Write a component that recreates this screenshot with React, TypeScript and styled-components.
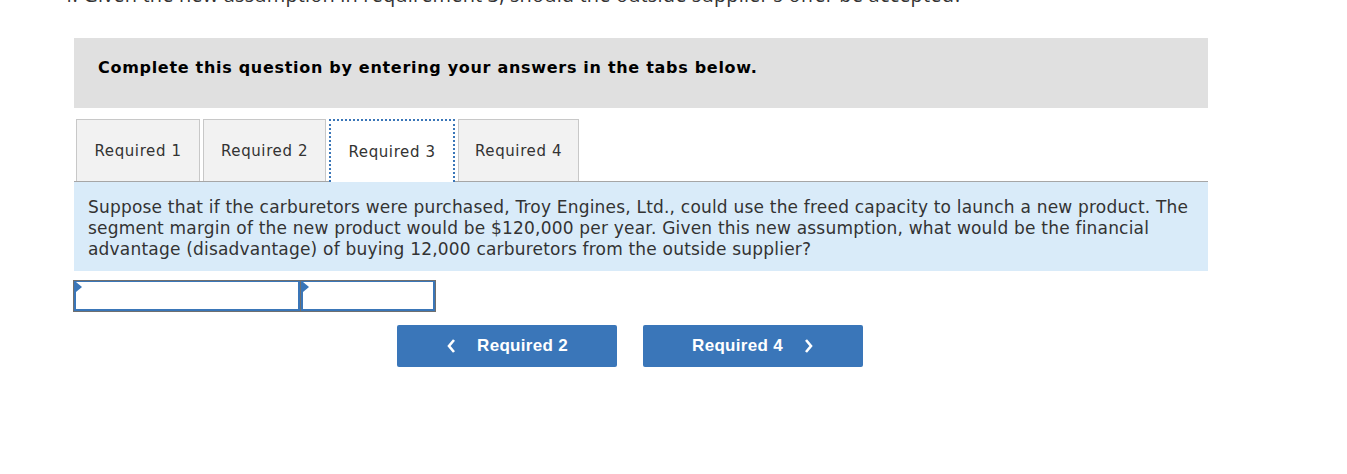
import React from "react";
import styled, { createGlobalStyle } from "styled-components";

const Global = createGlobalStyle`
  html, body { margin: 0; padding: 0; background: #fff; }
  body { font-family: "DejaVu Sans", Verdana, sans-serif; color: #333; overflow: hidden; }
`;

const Page = styled.div`
  width: 1347px;
  height: 474px;
  position: relative;
  overflow: hidden;
`;

const Question = styled.div`
  font-family: "Open Sans", "Liberation Sans", sans-serif;
  font-size: 20px;
  color: #333;
  line-height: 24px;
  margin: -17px 0 0 61px;
  letter-spacing: 0.15px;
  white-space: nowrap;
`;

const Container = styled.div`
  width: 1134px;
  margin: 31px 0 0 74px;
`;

const Banner = styled.div`
  background: #e0e0e0;
  height: 70px;
  padding: 0 24px;
  display: flex;
  align-items: center;
`;

const BannerText = styled.div`
  font-weight: bold;
  font-size: 16px;
  letter-spacing: 0.7px;
  color: #000;
  margin-top: -11px;
`;

const Tabs = styled.div`
  display: flex;
  align-items: flex-start;
  margin-top: 11px;
  padding-left: 2px;
  gap: 3px;
  border-bottom: 1px solid #a6a6a6;
`;

const Tab = styled.div<{ $active?: boolean; $w: number }>`
  box-sizing: border-box;
  width: ${(p) => p.$w}px;
  height: ${(p) => (p.$active ? "63px" : "62px")};
  display: flex;
  align-items: center;
  justify-content: center;
  padding-top: ${(p) => (p.$active ? "0px" : "1px")};
  font-size: 15px;
  letter-spacing: 0.6px;
  color: #333;
  background: ${(p) => (p.$active ? "#fff" : "#f2f2f2")};
  border: ${(p) => (p.$active ? "2px dotted #3a76b8" : "1px solid #c8c8c8")};
  border-bottom: none;
  margin-bottom: ${(p) => (p.$active ? "-1px" : "0")};
  position: relative;
  z-index: ${(p) => (p.$active ? 1 : 0)};
`;

const Prompt = styled.div`
  background: #d9ebf9;
  padding: 15px 8px 11px 14px;
  font-size: 17px;
  letter-spacing: 0.2px;
  line-height: 21px;
  color: #333;
`;

const AnswerRow = styled.div`
  display: flex;
  margin-top: 9px;
  width: 361px;
  border-top: 1px solid #7a7a7a;
  gap: 1px;
`;

const Cell = styled.div<{ $w: number }>`
  position: relative;
  box-sizing: border-box;
  width: ${(p) => p.$w}px;
  height: 30px;
  border: 2px solid #3a76b8;
  border-top-width: 1px;
  outline: 1px solid #6f6f6f;
  background: #fff;
`;

const Flag = styled.span`
  position: absolute;
  left: 0;
  top: 0;
  width: 0;
  height: 0;
  border-top: 5px solid transparent;
  border-bottom: 5px solid transparent;
  border-left: 6px solid #3a76b8;
`;

const Nav = styled.div`
  display: flex;
  gap: 26px;
  margin: 14px 0 0 323px;
`;

const NavButton = styled.button`
  box-sizing: border-box;
  width: 220px;
  height: 42px;
  background: #3a76b9;
  border: none;
  border-radius: 2px;
  color: #fff;
  font-family: "Liberation Sans", Arial, sans-serif;
  font-weight: bold;
  font-size: 17px;
  letter-spacing: 0.3px;
  display: flex;
  align-items: center;
  justify-content: center;
  gap: 20px;
  padding: 0;
  cursor: pointer;
`;

const Chevron = ({ dir }: { dir: "left" | "right" }) => (
  <svg width="11" height="16" viewBox="0 0 11 16" fill="none">
    <path
      d={dir === "left" ? "M8 2 L3 8 L8 14" : "M3 2 L8 8 L3 14"}
      stroke="#fff"
      strokeWidth="2.6"
    />
  </svg>
);

export default function App() {
  return (
    <Page>
      <Global />
      <Question>4. Given the new assumption in requirement 3, should the outside supplier's offer be accepted?</Question>
      <Container>
        <Banner>
          <BannerText>Complete this question by entering your answers in the tabs below.</BannerText>
        </Banner>
        <Tabs>
          <Tab $w={124}>Required 1</Tab>
          <Tab $w={123}>Required 2</Tab>
          <Tab $w={126} $active>Required 3</Tab>
          <Tab $w={121}>Required 4</Tab>
        </Tabs>
        <Prompt>
          Suppose that if the carburetors were purchased, Troy Engines, Ltd., could use the freed capacity to launch a new product. The segment margin of the new product would be $120,000 per year. Given this new assumption, what would be the financial advantage (disadvantage) of buying 12,000 carburetors from the outside supplier?
        </Prompt>
        <AnswerRow>
          <Cell $w={226}><Flag /></Cell>
          <Cell $w={134}><Flag /></Cell>
        </AnswerRow>
        <Nav>
          <NavButton>
            <Chevron dir="left" />
            <span>Required 2</span>
          </NavButton>
          <NavButton>
            <span>Required 4</span>
            <Chevron dir="right" />
          </NavButton>
        </Nav>
      </Container>
    </Page>
  );
}
